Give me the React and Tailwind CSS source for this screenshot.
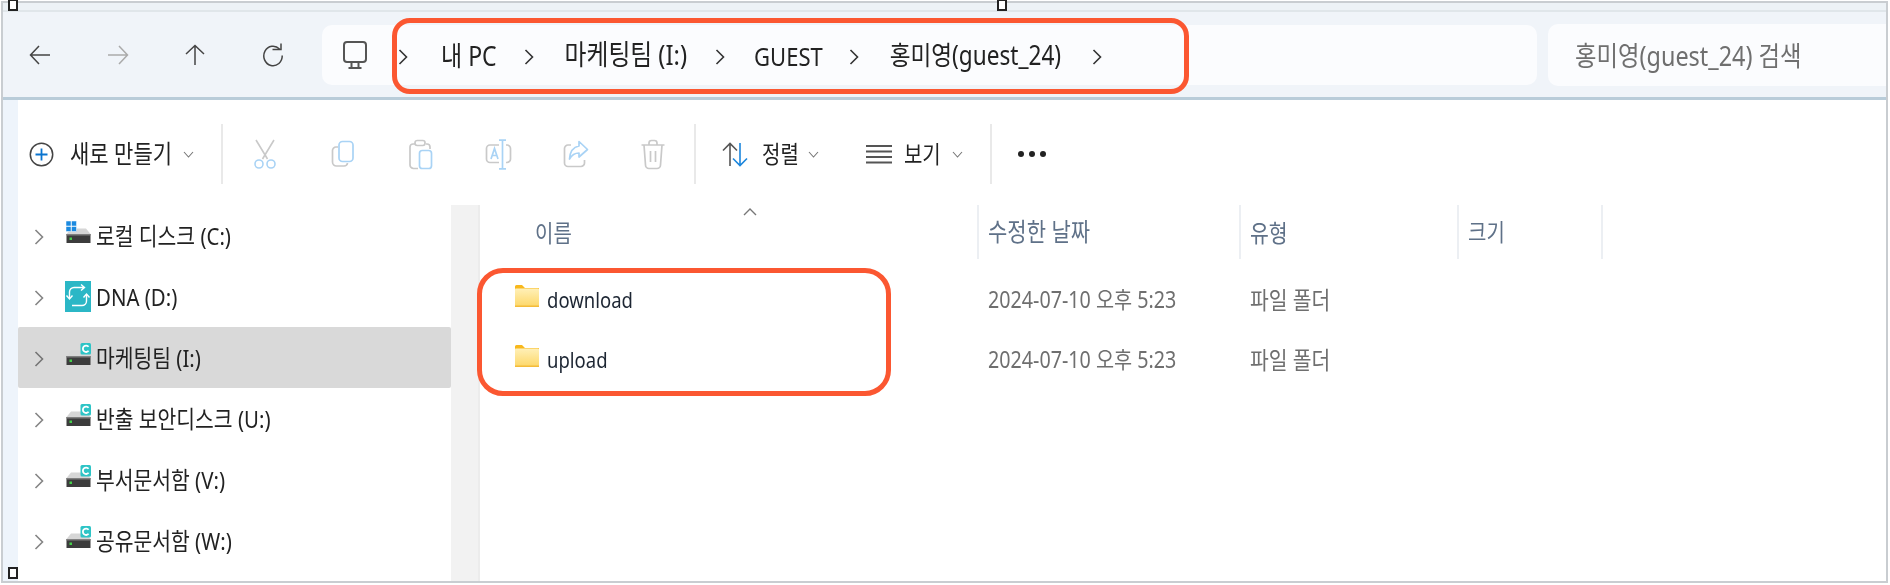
const GREY = "#c9c9c9";
const BLUE = "#a9d3f5";

function T({ className = "", children }) {
  return <span className={"inline-block whitespace-nowrap scale-y-[1.18] translate-y-[1px] " + className}>{children}</span>;
}

function Chevron({ className = "" }) {
  return (
    <svg width="10" height="18" viewBox="0 0 10 18" className={"shrink-0 " + className} fill="none" stroke="#333" strokeWidth="1.6">
      <path d="M1.5 2 L8.5 9 L1.5 16" />
    </svg>
  );
}

function Caret({ className = "" }) {
  return (
    <svg width="11" height="7" viewBox="0 0 11 7" className={"shrink-0 " + className} fill="none" stroke="#777" strokeWidth="1.1">
      <path d="M1 1 L5.5 6 L10 1" />
    </svg>
  );
}

function Separator({ className = "" }) {
  return <div className={"w-[2px] h-[60px] bg-[#e9e9e9] shrink-0 " + className} />;
}

function NavArrow({ rot = 0, color = "#444", className = "" }) {
  return (
    <svg width="24" height="24" viewBox="0 0 24 24" className={"shrink-0 " + className} fill="none" stroke={color} strokeWidth="1.5" style={{ transform: `rotate(${rot}deg)` }}>
      <path d="M22 12 H2.5 M11 3 L2.5 12 L11 21" />
    </svg>
  );
}

function Refresh({ className = "" }) {
  return (
    <svg width="24" height="24" viewBox="0 0 24 24" className={"shrink-0 " + className} fill="none" stroke="#444" strokeWidth="1.5">
      <path d="M18.5 6 A9.2 9.8 0 1 0 21.2 12.5" />
      <path d="M11.5 6.5 H20 V0.5" />
    </svg>
  );
}

function Monitor({ className = "" }) {
  return (
    <svg width="26" height="30" viewBox="0 0 26 30" className={"shrink-0 " + className} fill="none" stroke="#555" strokeWidth="2">
      <rect x="2" y="2" width="22" height="20" rx="3" />
      <path d="M9.5 23 V27 M16.5 23 V27 M6.5 28 H19.5" />
    </svg>
  );
}

function IconScissors({ className }) {
  return (
    <svg width="24" height="30" viewBox="0 0 24 30" className={"shrink-0 " + className} fill="none" strokeWidth="1.6">
      <path d="M3 1 L14.5 20 M21 1 L9.5 20" stroke={GREY} />
      <circle cx="6" cy="25" r="4" stroke={BLUE} />
      <circle cx="18" cy="25" r="4" stroke={BLUE} />
    </svg>
  );
}
function IconCopy({ className }) {
  return (
    <svg width="24" height="28" viewBox="0 0 24 28" className={"shrink-0 " + className} fill="none" strokeWidth="1.7">
      <path d="M7 7 H5 A3.5 3.5 0 0 0 1.5 10.5 V22 A4 4 0 0 0 5.5 26 H13 A3.5 3.5 0 0 0 16.5 23" stroke={GREY} />
      <rect x="8" y="1.5" width="14" height="20" rx="3.5" stroke={BLUE} />
    </svg>
  );
}
function IconPaste({ className }) {
  return (
    <svg width="24" height="31" viewBox="0 0 24 31" className={"shrink-0 " + className} fill="none" strokeWidth="1.7">
      <path d="M6 5 H4 A3 3 0 0 0 1 8 V26 A3.5 3.5 0 0 0 4.5 29.5 H9 M17 5 H18 A3 3 0 0 1 21 8 V10" stroke={GREY} />
      <rect x="6" y="1.5" width="10" height="5" rx="2.2" stroke={GREY} />
      <rect x="10.5" y="11.5" width="12" height="18" rx="2.8" stroke={BLUE} />
    </svg>
  );
}
function IconRename({ className }) {
  return (
    <svg width="27" height="31" viewBox="0 0 27 31" className={"shrink-0 " + className} fill="none" strokeWidth="1.7">
      <path d="M14 6 H5 A3.5 3.5 0 0 0 1.5 9.5 V20 A3.5 3.5 0 0 0 5 23.5 H14 M21 6 H22 A3.5 3.5 0 0 1 25.5 9.5 V20 A3.5 3.5 0 0 1 22 23.5 H21" stroke={GREY} />
      <path d="M14 1.2 H21 M17.5 1.2 V29.8 M14 29.8 H21" stroke={BLUE} />
      <path d="M6 20 L9.5 9.5 L13 20 M7 16.5 H12" stroke={BLUE} />
    </svg>
  );
}
function IconShare({ className }) {
  return (
    <svg width="26" height="29" viewBox="0 0 26 29" className={"shrink-0 " + className} fill="none" strokeWidth="1.7">
      <path d="M8 5 H5 A3.5 3.5 0 0 0 1.5 8.5 V23 A3.5 3.5 0 0 0 5 26.5 H18 A3.5 3.5 0 0 0 21.5 23 V20" stroke={GREY} />
      <path d="M16 1.5 L24.5 9.5 L16 17 V13 C12 13 9 14.5 6.5 19 C7 12 10.5 7 16 6 Z" stroke={BLUE} strokeLinejoin="round" />
    </svg>
  );
}
function IconTrash({ className }) {
  return (
    <svg width="24" height="31" viewBox="0 0 24 31" className={"shrink-0 " + className} fill="none" stroke={GREY} strokeWidth="1.7">
      <path d="M0.5 6 H23.5 M8 5.5 V4 A2.5 2.5 0 0 1 10.5 1.5 H13.5 A2.5 2.5 0 0 1 16 4 V5.5" />
      <path d="M3 6 L4.5 26 A3.5 3.5 0 0 0 8 29.5 H16 A3.5 3.5 0 0 0 19.5 26 L21 6" />
      <path d="M9.5 12 V23 M14.5 12 V23" />
    </svg>
  );
}
function IconPlus({ className }) {
  return (
    <svg width="25" height="25" viewBox="0 0 25 25" className={"shrink-0 " + className} fill="none">
      <circle cx="12.5" cy="12.5" r="11.2" stroke="#444" strokeWidth="1.5" />
      <path d="M12.5 6.5 V18.5 M6.5 12.5 H18.5" stroke="#0a74cf" strokeWidth="1.8" />
    </svg>
  );
}
function IconSort({ className }) {
  return (
    <svg width="26" height="25" viewBox="0 0 26 25" className={"shrink-0 " + className} fill="none" strokeWidth="1.6">
      <path d="M8 24 V2 M1 8.5 L8 1.5 L15 8.5" stroke="#555" />
      <path d="M18 1 V23 M11 16.5 L18 23.5 L25 16.5" stroke="#1c86dc" />
    </svg>
  );
}
function IconView({ className }) {
  return (
    <svg width="26" height="20" viewBox="0 0 26 20" className={"shrink-0 " + className} fill="none" stroke="#555" strokeWidth="1.8">
      <path d="M0 2 H26 M0 7.5 H26 M0 13 H26 M0 18.5 H26" />
    </svg>
  );
}
function Folder({ className = "" }) {
  return (
    <svg width="24" height="22" viewBox="0 0 24 22" className={"shrink-0 " + className}>
      <defs>
        <linearGradient id="fg" x1="0" y1="0" x2="0" y2="1">
          <stop offset="0" stopColor="#fff0b8" />
          <stop offset="1" stopColor="#fdd767" />
        </linearGradient>
      </defs>
      <path d="M0 1.5 A1.5 1.5 0 0 1 1.5 0 H7 L10 3 H24 V6 H0 Z" fill="#f8b81c" />
      <rect x="0" y="3.5" width="24" height="18.5" rx="0.8" fill="url(#fg)" />
      <rect x="0" y="20.5" width="24" height="1.5" fill="#f4bc3a" />
    </svg>
  );
}
function Disk({ badge = "c" }) {
  return (
    <svg width="25" height="22" viewBox="0 0 25 22" className="shrink-0 -translate-y-[4px]">
      <path d="M5 7.5 H20 L24.5 13 H0.5 Z" fill="#d6d6d6" />
      <rect x="0.5" y="13" width="24" height="9" fill="#3c3c3c" />
      <rect x="0.5" y="13" width="24" height="1.5" fill="#7f7f7f" />
      <rect x="3.5" y="16.5" width="2.5" height="2.5" fill="#45d04a" />
      {badge === "win" ? (
        <g fill="#1b8ae0" stroke="#fff" strokeWidth="0.5">
          <rect x="0" y="0" width="5" height="5" />
          <rect x="5.5" y="0" width="5" height="5" />
          <rect x="0" y="5.5" width="5" height="5" />
          <rect x="5.5" y="5.5" width="5" height="5" />
        </g>
      ) : null}
      {badge === "c" ? (
        <g>
          <rect x="14.5" y="0" width="10.5" height="11.5" rx="1.5" fill="#2ec4c6" />
          <path d="M22.6 3.8 A3.2 3.2 0 1 0 22.6 7.8" fill="none" stroke="#fff" strokeWidth="1.8" />
        </g>
      ) : null}
    </svg>
  );
}
function DnaIcon() {
  return (
    <svg width="26" height="31" viewBox="0 0 26 31" className="shrink-0">
      <rect width="26" height="31" fill="#2bb7c6" />
      <g fill="none" stroke="#fff" strokeWidth="1.4">
        <path d="M4.5 17 V11 A4.5 4.5 0 0 1 9 6.5 H19 M16 3.5 L19.5 6.5 L16 9.5" />
        <path d="M1.5 14.5 L4.5 18 L7.5 14.5" />
        <path d="M21.5 14 V20 A4.5 4.5 0 0 1 17 24.5 H7" />
        <path d="M18.5 16.5 L21.5 13 L24.5 16.5" />
      </g>
    </svg>
  );
}

const drives = [
  { badge: "win", name: "로컬 디스크 (C:)" },
  { dna: true, name: "DNA (D:)" },
  { badge: "c", name: "마케팅팀 (I:)", selected: true },
  { badge: "c", name: "반출 보안디스크 (U:)" },
  { badge: "c", name: "부서문서함 (V:)" },
  { badge: "c", name: "공유문서함 (W:)" },
];

const files = ["download", "upload"];

function Handle({ className }) {
  return <div className={"absolute w-[10px] h-[12px] border-2 border-[#222] bg-white " + className} />;
}

export default function App() {
  return (
    <div className="relative w-[1890px] h-[585px] overflow-hidden bg-white font-['Noto_Sans','Noto_Sans_CJK_KR',sans-serif] text-[#222] blur-[0.4px]">
      <div className="mx-[1px] mt-[1px] h-[582px] w-[1887px] border-2 border-[#c9cdd1] flex flex-col overflow-hidden">
        {/* title strip */}
        <div className="h-[9px] bg-[#edf2f6] border-b-2 border-[#e0e6ea] shrink-0" />
        {/* address row */}
        <div className="h-[88px] shrink-0 bg-[#f0f4f9] border-b-[3px] border-[#b9ccd9] flex items-center pl-[25px]">
          <NavArrow />
          <NavArrow color="#aaa" rot={180} className="ml-[54px]" />
          <NavArrow rot={90} className="ml-[53px]" />
          <Refresh className="ml-[54px]" />
          <div className="ml-[37px] w-[1215px] h-[60px] bg-[#fbfcfe] rounded-[10px] flex items-center text-[#222]">
            <Monitor className="ml-[20px]" />
            <Chevron className="ml-[30px] translate-y-[2px]" />
            <T className="ml-[33px] text-[23px]">내 PC</T>
            <Chevron className="ml-[27px] translate-y-[2px]" />
            <T className="ml-[31px] text-[23.8px]">마케팅팀 (I:)</T>
            <Chevron className="ml-[28px] translate-y-[2px]" />
            <T className="ml-[29px] text-[22px]">GUEST</T>
            <Chevron className="ml-[26px] translate-y-[2px]" />
            <T className="ml-[31px] text-[22.6px]">홍미영(guest_24)</T>
            <Chevron className="ml-[31px] translate-y-[2px]" />
          </div>
          <div className="ml-[11px] flex-1 h-[62px] bg-[#fbfcfe] rounded-l-[10px] flex items-center pl-[27px] text-[23.4px] text-[#6f6f6f]">
            <T>홍미영(guest_24) 검색</T>
          </div>
        </div>

        <div className="flex-1 flex min-h-0">
          {/* left strip */}
          <div className="w-[15px] shrink-0 bg-[#eef4fb]" />
          <div className="flex-1 flex flex-col min-w-0">
            {/* toolbar */}
            <div className="h-[105px] shrink-0 flex items-center pt-[3px]">
              <IconPlus className="ml-[11px]" />
              <T className="ml-[16px] text-[21px]">새로 만들기</T>
              <Caret className="ml-[11px]" />
              <Separator className="ml-[27px]" />
              <IconScissors className="ml-[30px]" />
              <IconCopy className="ml-[54px]" />
              <IconPaste className="ml-[54px]" />
              <IconRename className="ml-[52px]" />
              <IconShare className="ml-[51px]" />
              <IconTrash className="ml-[52px]" />
              <Separator className="ml-[29px]" />
              <IconSort className="ml-[26px]" />
              <T className="ml-[14px] text-[20px]">정렬</T>
              <Caret className="ml-[9px]" />
              <IconView className="ml-[47px]" />
              <T className="ml-[12px] text-[20px]">보기</T>
              <Caret className="ml-[11px]" />
              <Separator className="ml-[27px]" />
              <div className="ml-[26px] flex gap-[5px]">
                <div className="w-[6px] h-[6px] rounded-full bg-[#222]" />
                <div className="w-[6px] h-[6px] rounded-full bg-[#222]" />
                <div className="w-[6px] h-[6px] rounded-full bg-[#222]" />
              </div>
            </div>

            <div className="flex-1 flex min-h-0">
              {/* sidebar */}
              <div className="w-[433px] shrink-0 flex flex-col">
                {drives.map((d) => (
                  <div
                    key={d.name}
                    className={
                      d.selected
                        ? "h-[61px] shrink-0 flex items-center bg-[#d9d9d9] rounded-[2px]"
                        : "h-[61px] shrink-0 flex items-center"
                    }
                  >
                    <Chevron className="ml-[16px] opacity-60 translate-y-[1px]" />
                    <div className="ml-[21px] w-[26px] flex justify-center">
                      {d.dna ? <DnaIcon /> : <Disk badge={d.badge} />}
                    </div>
                    <T className="ml-[5px] text-[20.4px]">{d.name}</T>
                  </div>
                ))}
              </div>
              {/* scroll gutter */}
              <div className="w-[29px] shrink-0 bg-[#f2f2f2] border-r-2 border-[#ececec]" />
              {/* list */}
              <div className="flex-1 min-w-0 flex flex-col">
                <div className="relative h-[56px] shrink-0 flex text-[#5f7188]">
                  <div className="w-[497px] flex items-center pl-[55px]"><T className="text-[20px]">이름</T></div>
                  <div className="w-[262px] h-[54px] flex items-center pl-[9px] border-l-2 border-[#eceff3]"><T className="text-[21px]">수정한 날짜</T></div>
                  <div className="w-[218px] h-[54px] flex items-center pl-[9px] border-l-2 border-[#eceff3]"><T className="text-[20.5px]">유형</T></div>
                  <div className="w-[146px] h-[54px] flex items-center pl-[9px] border-x-2 border-[#eceff3]"><T className="text-[20px]">크기</T></div>
                  <svg width="14" height="8" viewBox="0 0 14 8" className="absolute left-[263px] top-[3px]" fill="none" stroke="#777" strokeWidth="1.4">
                    <path d="M1 7 L7 1 L13 7" />
                  </svg>
                </div>
                <div className="flex flex-col mt-[8px]">
                  {files.map((f) => (
                    <div key={f} className="h-[60px] flex items-center">
                      <div className="w-[497px] flex items-center pl-[35px]">
                        <Folder className="-translate-y-[3px]" />
                        <T className="ml-[8px] text-[18.5px] text-[#1d2633]">{f}</T>
                      </div>
                      <div className="w-[262px] pl-[11px] text-[#6f6f6f]"><T className="text-[19.7px]">2024-07-10 오후 5:23</T></div>
                      <div className="w-[218px] pl-[11px] text-[#6f6f6f]"><T className="text-[20.4px]">파일 폴더</T></div>
                    </div>
                  ))}
                </div>
              </div>
            </div>
          </div>
        </div>
      </div>

      {/* annotations lying over the window */}
      <div className="absolute left-[392px] top-[18px] w-[797px] h-[76px] border-[5px] border-[#fb5731] rounded-[18px]" />
      <div className="absolute left-[477px] top-[268px] w-[414px] h-[128px] border-[5px] border-[#fb5731] rounded-[26px]" />
      <Handle className="left-[8px] top-[-1px]" />
      <Handle className="left-[997px] top-[-1px]" />
      <Handle className="left-[8px] top-[567px]" />
    </div>
  );
}
